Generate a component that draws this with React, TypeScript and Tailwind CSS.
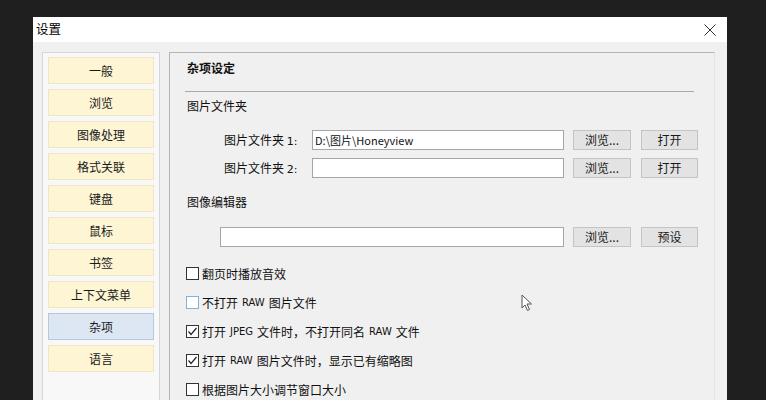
import React from "react";

const font = { fontFamily: '"Noto Sans CJK SC", "Noto Sans", sans-serif' } as const;

function NavBtn({ label, active }: { label: string; active?: boolean }) {
  return (
    <div
      className={
        "h-[27px] w-[106px] shrink-0 flex items-center justify-center text-[12px] leading-none text-[#1a1a1a] border " +
        (active ? "bg-[#dde6f3] border-[#b9c7dc]" : "bg-[#fdf5d3] border-[#efe6c2]")
      }
    >
      {label}
    </div>
  );
}

function Btn({ label, w }: { label: string; w: string }) {
  return (
    <div
      className={
        "h-[20px] flex items-center justify-center bg-[#e3e3e3] border border-[#c4c4c4] text-[12px] leading-none text-[#1a1a1a] " +
        w
      }
    >
      {label}
    </div>
  );
}

function Raw({ t }: { t: string }) {
  return (
    <span className="text-[10px] mx-[4px] text-[#111]" style={{ fontFamily: '"DejaVu Sans", sans-serif' }}>
      {t}
    </span>
  );
}

function Check({ checked, focus, children }: { checked?: boolean; focus?: boolean; children: React.ReactNode }) {
  return (
    <div className="h-[29px] shrink-0 flex items-center pl-[16px]">
      <div
        className={
          "w-[13px] h-[13px] bg-white border flex items-center justify-center " +
          (focus ? "border-[#7fb2dc]" : "border-[#333333]")
        }
      >
        {checked && (
          <svg width="11" height="11" viewBox="0 0 11 11">
            <path d="M1.5 5.5 L4 8.5 L9.5 2" fill="none" stroke="#222" strokeWidth="1.2" />
          </svg>
        )}
      </div>
      <div className="ml-[3px] text-[12px] leading-none text-[#111] flex items-center">{children}</div>
    </div>
  );
}

export default function App() {
  const nav = ["一般", "浏览", "图像处理", "格式关联", "键盘", "鼠标", "书签", "上下文菜单", "杂项", "语言"];
  return (
    <div className="relative w-[766px] h-[400px] overflow-hidden bg-[#1f1f1f] pt-[17px] pl-[33px]" style={font}>
      <div className="w-[694px] flex flex-col bg-[#f0f0f0]">
        {/* title bar */}
        <div className="h-[25px] shrink-0 bg-white flex items-center justify-between pl-[3px] pr-[11px]">
          <span className="text-[12.5px] leading-none text-black">设置</span>
          <svg width="12" height="12" viewBox="0 0 12 12">
            <path d="M0.5 0.5 L11.5 11.5 M11.5 0.5 L0.5 11.5" stroke="#333" strokeWidth="1" />
          </svg>
        </div>
        {/* body */}
        <div className="h-[380px] shrink-0 flex pt-[10px] pl-[9px] gap-[9px]">
          <div className="w-[118px] border border-[#d6d6d6] bg-[#f8f8f8] pt-[4px] pl-[5px] flex flex-col gap-[5px]">
            {nav.map((n) => (
              <NavBtn key={n} label={n} active={n === "杂项"} />
            ))}
          </div>
          <div className="w-[546px] border-t border-l border-r border-[#b4b4b4] border-r-[#e4e4e4] flex flex-col">
            <div className="h-[30px] shrink-0 flex items-center pl-[17px] text-[12px] font-bold leading-none text-[#111]">杂项设定</div>
            <div className="mt-[8px] ml-[15px] mr-[20px] h-px shrink-0 bg-[#a8a8a8]" />
            <div className="h-[28px] shrink-0 flex items-center pl-[17px] text-[12px] leading-none text-[#111]">图片文件夹</div>
            <div className="mt-[10px] h-[20px] shrink-0 flex items-center pl-[54px]">
              <div className="w-[88px] text-[12px] leading-none text-[#111]">
                图片文件夹 <span className="text-[11px]" style={{ fontFamily: '"DejaVu Sans", sans-serif' }}>1:</span>
              </div>
              <div className="w-[252px] h-[20px] bg-white border border-[#a6a6a6] flex items-center pl-[2px] text-[11px] leading-none text-[#111]">
                D:\图片\Honeyview
              </div>
              <div className="ml-[9px]"><Btn label="浏览..." w="w-[58px]" /></div>
              <div className="ml-[10px]"><Btn label="打开" w="w-[57px]" /></div>
            </div>
            <div className="mt-[8px] h-[20px] shrink-0 flex items-center pl-[54px]">
              <div className="w-[88px] text-[12px] leading-none text-[#111]">
                图片文件夹 <span className="text-[11px]" style={{ fontFamily: '"DejaVu Sans", sans-serif' }}>2:</span>
              </div>
              <div className="w-[252px] h-[20px] bg-white border border-[#a6a6a6]" />
              <div className="ml-[9px]"><Btn label="浏览..." w="w-[58px]" /></div>
              <div className="ml-[10px]"><Btn label="打开" w="w-[57px]" /></div>
            </div>
            <div className="mt-[10px] h-[28px] shrink-0 flex items-center pl-[17px] text-[12px] leading-none text-[#111]">图像编辑器</div>
            <div className="mt-[11px] h-[20px] shrink-0 flex items-center pl-[50px]">
              <div className="w-[344px] h-[20px] bg-white border border-[#a6a6a6]" />
              <div className="ml-[9px]"><Btn label="浏览..." w="w-[58px]" /></div>
              <div className="ml-[10px]"><Btn label="预设" w="w-[57px]" /></div>
            </div>
            <div className="mt-[12px] flex flex-col">
              <Check>翻页时播放音效</Check>
              <Check focus>
                不打开<Raw t="RAW" />图片文件
              </Check>
              <Check checked>
                打开<Raw t="JPEG" />文件时，不打开同名<Raw t="RAW" />文件
              </Check>
              <Check checked>
                打开<Raw t="RAW" />图片文件时，显示已有缩略图
              </Check>
              <Check>根据图片大小调节窗口大小</Check>
            </div>
          </div>
        </div>
      </div>
      {/* mouse cursor */}
      <svg className="absolute left-[521px] top-[294px]" width="12" height="18" viewBox="0 0 12 18">
        <path d="M1 1 L1 14 L4 11 L6.5 16.5 L8.5 15.5 L6 10 L10.5 10 Z" fill="#fff" stroke="#555" strokeWidth="1" />
      </svg>
    </div>
  );
}
